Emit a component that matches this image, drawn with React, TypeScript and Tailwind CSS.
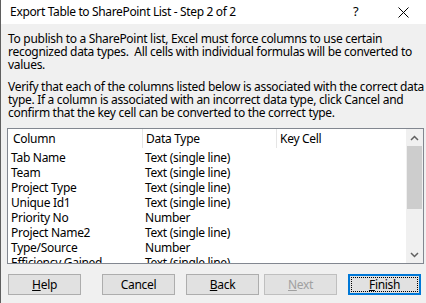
import React from "react";

const rows: [string, string][] = [
  ["Tab Name", "Text (single line)"],
  ["Team", "Text (single line)"],
  ["Project Type", "Text (single line)"],
  ["Unique Id1", "Text (single line)"],
  ["Priority No", "Number"],
  ["Project Name2", "Text (single line)"],
  ["Type/Source", "Number"],
  ["Efficiency Gained", "Text (single line)"],
];

function Btn({ children, disabled, primary }: { children: React.ReactNode; disabled?: boolean; primary?: boolean }) {
  if (primary) {
    return (
      <div className="w-[73px] h-[21px] border-2 border-[#0078d7] bg-[#e1e1e1] p-[1px]">
        <div className="w-full h-full border border-dotted border-black flex items-center justify-center text-black leading-none">
          {children}
        </div>
      </div>
    );
  }
  return (
    <div
      className={
        "w-[73px] h-[21px] border flex items-center justify-center leading-none " +
        (disabled ? "border-[#bfbfbf] bg-[#e1e1e1] text-[#a0a0a0]" : "border-[#adadad] bg-[#e1e1e1] text-black")
      }
    >
      {children}
    </div>
  );
}

export default function App() {
  return (
    <div
      className="w-[426px] h-[303px] flex overflow-hidden text-[12px] tracking-[-0.3px] text-black"
      style={{ fontFamily: '"Noto Sans", "Open Sans", sans-serif' }}
    >
      <div className="w-[2px] h-full bg-[#a9bf92] flex flex-col">
        {Array.from({ length: 21 }).map((_, i) => (
          <div key={i} className="h-[15px] shrink-0 border-b border-[#4d5a43]" />
        ))}
      </div>
      <div className="flex-1 h-full border-l border-[#5f5f5f] flex flex-col bg-[#f0f0f0]">
        <div className="h-[24px] bg-white flex items-center pl-[9px] relative">
          <span className="leading-none tracking-[-0.35px]">Export Table to SharePoint List - Step 2 of 2</span>
          <span className="absolute left-[352px] top-[5px] leading-none text-[13px]">?</span>
          <svg className="absolute left-[397px] top-[7px]" width="11" height="11" viewBox="0 0 11 11">
            <path d="M0.5 0.5 L10.5 10.5 M10.5 0.5 L0.5 10.5" stroke="#000" strokeWidth="1" fill="none" />
          </svg>
        </div>
        <div className="flex-1 flex flex-col pl-[6px] pr-[2px] pt-[8px]">
          <p className="leading-[13px] pl-[1px] whitespace-nowrap">
            To publish to a SharePoint list, Excel must force columns to use certain
            <br />
            recognized data types.&nbsp; All cells with individual formulas will be converted to
            <br />
            values.
          </p>
          <p className="leading-[13px] pl-[1px] mt-[9px] whitespace-nowrap">
            Verify that each of the columns listed below is associated with the correct data
            <br />
            type. If a column is associated with an incorrect data type, click Cancel and
            <br />
            confirm that the key cell can be converted to the correct type.
          </p>
          <div className="mt-[9px] h-[136px] border border-[#828790] bg-white flex">
            <div className="flex-1 flex flex-col overflow-hidden">
              <div className="h-[21px] shrink-0 flex">
                <div className="w-[135px] border-r border-[#e5e5e5] h-[19px] flex items-center pl-[5px] leading-none">Column</div>
                <div className="w-[134px] border-r border-[#e5e5e5] h-[19px] flex items-center pl-[3px] leading-none">Data Type</div>
                <div className="flex-1 h-[19px] flex items-center pl-[3px] leading-none">Key Cell</div>
              </div>
              {rows.map(([a, b]) => (
                <div key={a} className="h-[15px] shrink-0 flex items-center leading-[15px]">
                  <div className="w-[135px] pl-[3px] whitespace-nowrap">{a}</div>
                  <div className="w-[134px] pl-[2px] whitespace-nowrap">{b}</div>
                </div>
              ))}
            </div>
            <div className="w-[17px] h-full bg-[#f0f0f0] flex flex-col">
              <div className="h-[17px] flex items-center justify-center">
                <svg width="9" height="6" viewBox="0 0 9 6">
                  <path d="M1 5 L4.5 1.5 L8 5" stroke="#606060" strokeWidth="1.5" fill="none" />
                </svg>
              </div>
              <div className="h-[63px] mx-[1px] bg-[#cdcdcd]" />
              <div className="flex-1" />
              <div className="h-[17px] flex items-center justify-center">
                <svg width="9" height="6" viewBox="0 0 9 6">
                  <path d="M1 1 L4.5 4.5 L8 1" stroke="#606060" strokeWidth="1.5" fill="none" />
                </svg>
              </div>
            </div>
          </div>
          <div className="mt-[10px] flex items-center pl-[1px]">
            <Btn><span><u>H</u>elp</span></Btn>
            <div className="ml-[21px]"><Btn>Cancel</Btn></div>
            <div className="ml-[11px]"><Btn><span><u>B</u>ack</span></Btn></div>
            <div className="ml-[5px]"><Btn disabled><span><u>N</u>ext</span></Btn></div>
            <div className="ml-[11px]"><Btn primary><span><u>F</u>inish</span></Btn></div>
          </div>
        </div>
      </div>
    </div>
  );
}
